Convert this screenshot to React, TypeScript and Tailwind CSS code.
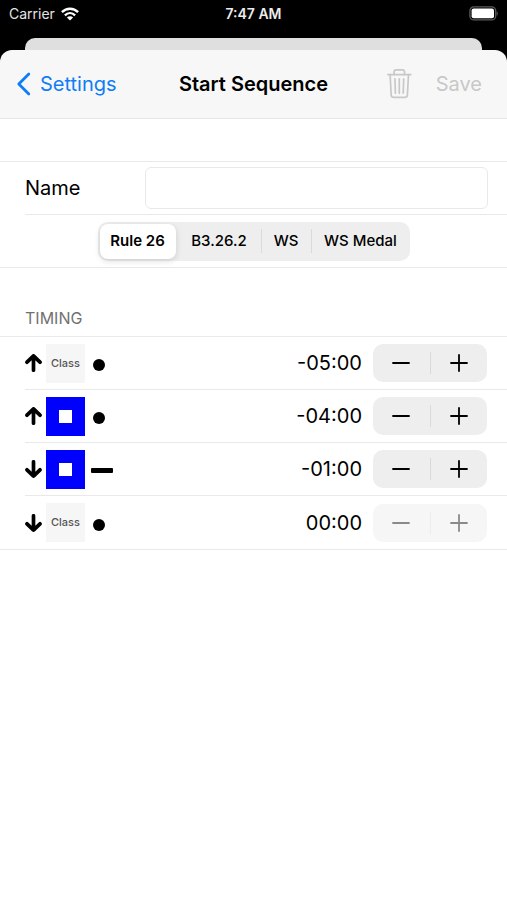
import { useState } from "react";
import { clsx } from "clsx";

type Signal = {
  direction: "up" | "down";
  flag: "class" | "papa";
  sound: "short" | "long";
  time: string;
  locked?: boolean;
};

const rules = [
  { label: "Rule 26", width: "w-20" },
  { label: "B3.26.2", width: "w-[83px]" },
  { label: "WS", width: "w-[50px]" },
  { label: "WS Medal", width: "w-[99px]" },
];

const signals: Signal[] = [
  { direction: "up", flag: "class", sound: "short", time: "-05:00" },
  { direction: "up", flag: "papa", sound: "short", time: "-04:00" },
  { direction: "down", flag: "papa", sound: "long", time: "-01:00" },
  { direction: "down", flag: "class", sound: "short", time: "00:00", locked: true },
];

function StatusBar() {
  return (
    <div className="grid h-[38px] grid-cols-3 items-start px-[9px] pt-1 text-white">
      <div className="flex h-5 items-center gap-1.5 text-sm text-[#e4e4e4]">
        Carrier
        <svg aria-hidden className="h-[14px] w-[18px]" viewBox="0 0 18 14">
          <g fill="none" stroke="#fff" strokeWidth="2.4">
            <path d="M0.9 5.2C5.5 0.6 12.5 0.6 17.1 5.2" />
            <path d="M3.9 8.3C6.9 5.4 11.1 5.4 14.1 8.3" />
          </g>
          <path d="M9 13.6 5.9 10.4C7.6 8.9 10.4 8.9 12.1 10.4Z" fill="#fff" />
        </svg>
      </div>
      <div className="h-5 text-center text-sm leading-5 font-semibold text-[#ececec]">
        7:47 AM
      </div>
      <div className="flex h-[19px] items-center justify-end">
        <svg aria-hidden className="h-[15px] w-[30px]" viewBox="0 0 30 15">
          <rect
            x="1.9"
            y="0.9"
            width="25.8"
            height="13"
            rx="4"
            fill="none"
            stroke="#5b5b5b"
            strokeWidth="1.3"
          />
          <rect x="3.6" y="2.6" width="22.4" height="9.6" rx="2" fill="#fff" />
          <path d="M28.6 5.2C30.2 6 30.2 9 28.6 9.8Z" fill="#5b5b5b" />
        </svg>
      </div>
    </div>
  );
}

function NavBar() {
  return (
    <header className="grid h-[69px] grid-cols-[1fr_auto_1fr] items-center rounded-t-xl border-b border-[#e6e6e6] bg-[#f7f7f7] px-4 text-xl">
      <button className="flex items-center gap-2 text-[#0f7df5]" type="button">
        <svg aria-hidden className="h-6 w-4" viewBox="0 0 16 24">
          <path
            d="M12.8 2 2.8 12l10 10"
            fill="none"
            stroke="currentColor"
            strokeWidth="2.8"
            strokeLinecap="round"
            strokeLinejoin="round"
          />
        </svg>
        Settings
      </button>
      <h1 className="font-semibold">Start Sequence</h1>
      <div className="flex items-center justify-end gap-6 pr-[9px] text-[#c8c8c8]">
        <button aria-label="Delete" disabled type="button">
          <svg
            aria-hidden
            className="h-[30px] w-[26px]"
            viewBox="0 0 26 30"
            fill="none"
            stroke="currentColor"
            strokeWidth="1.7"
            strokeLinecap="round"
            strokeLinejoin="round"
          >
            <path d="M1.8 5.6h23" />
            <path d="M8.1 5.6V3c0-1.3.8-2.1 2.1-2.1h6.2c1.3 0 2.1.8 2.1 2.1v2.6" />
            <path d="m4.1 5.6 1.1 20.4c.1 1.5 1 2.4 2.5 2.4h11.2c1.5 0 2.4-.9 2.5-2.4L22.5 5.6" />
            <path d="m8.9 9.8.5 14.4M13.3 9.8v14.4M17.7 9.8l-.5 14.4" />
          </svg>
        </button>
        <button disabled type="button">
          Save
        </button>
      </div>
    </header>
  );
}

function RulePicker() {
  const [selected, setSelected] = useState("Rule 26");

  return (
    <div
      aria-label="Rule"
      className="flex h-[39px] rounded-[10px] bg-[#eeeeee] text-[15px] font-medium"
      role="radiogroup"
    >
      {rules.map(({ label, width }, index) => (
        <label
          className={clsx(
            "relative flex items-center",
            width,
            index > 1 &&
              "before:h-6 before:w-px before:bg-[#dadada] before:content-['']",
          )}
          key={label}
        >
          <input
            checked={selected === label}
            className="peer sr-only"
            name="rule"
            onChange={() => setSelected(label)}
            type="radio"
          />
          <span className="m-0.5 flex h-[35px] flex-1 items-center justify-center rounded-lg whitespace-nowrap peer-checked:bg-white peer-checked:font-semibold peer-checked:shadow-[0_2px_6px_rgba(0,0,0,0.14)]">
            {label}
          </span>
        </label>
      ))}
    </div>
  );
}

function Arrow({ direction }: { direction: Signal["direction"] }) {
  return (
    <svg
      aria-label={direction}
      className={clsx("h-[18px] w-[17px] shrink-0", direction === "down" && "rotate-180")}
      role="img"
      viewBox="0 0 17 18"
    >
      <path
        d="M8.5 16.2V2M2 8.2 8.5 1.9 15 8.2"
        fill="none"
        stroke="#000"
        strokeWidth="3.7"
        strokeLinecap="round"
        strokeLinejoin="round"
      />
    </svg>
  );
}

function Flag({ kind }: { kind: Signal["flag"] }) {
  if (kind === "class") {
    return (
      <div className="flex size-[39px] items-center justify-center bg-[#f6f6f6] text-[11px] font-medium text-[#555]">
        Class
      </div>
    );
  }

  return (
    <div className="flex size-[39px] items-center justify-center bg-[#0000ff]">
      <div className="size-[13px] bg-white" />
    </div>
  );
}

function Sound({ kind }: { kind: Signal["sound"] }) {
  return kind === "short" ? (
    <div className="mt-1 ml-0.5 size-3 rounded-full bg-black" />
  ) : (
    <div className="mt-0.5 h-[5px] w-[22px] rounded-[1px] bg-black" />
  );
}

function Stepper({ disabled }: { disabled?: boolean }) {
  return (
    <div
      className={clsx(
        "flex h-[38px] w-[114px] items-center rounded-[10px]",
        disabled ? "bg-[#f6f6f7] text-[#8a8a8a]" : "bg-[#eeeeee] text-black",
      )}
    >
      <button
        aria-label="Earlier"
        className="flex h-full flex-1 items-center justify-center"
        disabled={disabled}
        type="button"
      >
        <svg aria-hidden className="size-[18px]" viewBox="0 0 18 18">
          <path d="M1 9h16" stroke="currentColor" strokeWidth="1.8" strokeLinecap="round" />
        </svg>
      </button>
      <div className={clsx("h-[22px] w-px", disabled ? "bg-[#ececee]" : "bg-[#dadada]")} />
      <button
        aria-label="Later"
        className="flex h-full flex-1 items-center justify-center"
        disabled={disabled}
        type="button"
      >
        <svg aria-hidden className="size-[18px]" viewBox="0 0 18 18">
          <path d="M1 9h16M9 1v16" stroke="currentColor" strokeWidth="1.8" strokeLinecap="round" />
        </svg>
      </button>
    </div>
  );
}

export default function App() {
  return (
    <div className="min-h-screen bg-white font-['Inter','Liberation_Sans',sans-serif] text-black">
      <div className="bg-black">
        <StatusBar />
        <div className="mx-[25px] h-3 rounded-t-[10px] bg-[#dfdfdf]" />
        <NavBar />
      </div>

      <main>
        <section className="mt-[42px] border-y border-[#e9e9e9]">
          <div className="ml-[25px] flex h-[53px] items-center border-b border-[#e9e9e9] pr-[19px]">
            <label className="w-[120px] text-xl" htmlFor="name">
              Name
            </label>
            <input
              className="h-[42px] min-w-0 flex-1 rounded-md border border-[#e9e9e9] px-2 text-xl outline-none"
              id="name"
              type="text"
            />
          </div>
          <div className="flex h-[52px] items-center justify-center">
            <RulePicker />
          </div>
        </section>

        <section>
          <h2 className="mt-10 ml-[25px] pb-2 text-base leading-5 text-[#717171]">TIMING</h2>
          <ul className="border-y border-[#e9e9e9]">
            {signals.map((signal) => (
              <li
                className="ml-[25px] flex h-[53px] items-center border-b border-[#e9e9e9] pr-5 last:border-b-0"
                key={signal.time}
              >
                <Arrow direction={signal.direction} />
                <div className="mr-1.5 ml-1">
                  <Flag kind={signal.flag} />
                </div>
                <Sound kind={signal.sound} />
                <span className="mr-[11px] ml-auto text-xl">{signal.time}</span>
                <Stepper disabled={signal.locked} />
              </li>
            ))}
          </ul>
        </section>
      </main>
    </div>
  );
}
